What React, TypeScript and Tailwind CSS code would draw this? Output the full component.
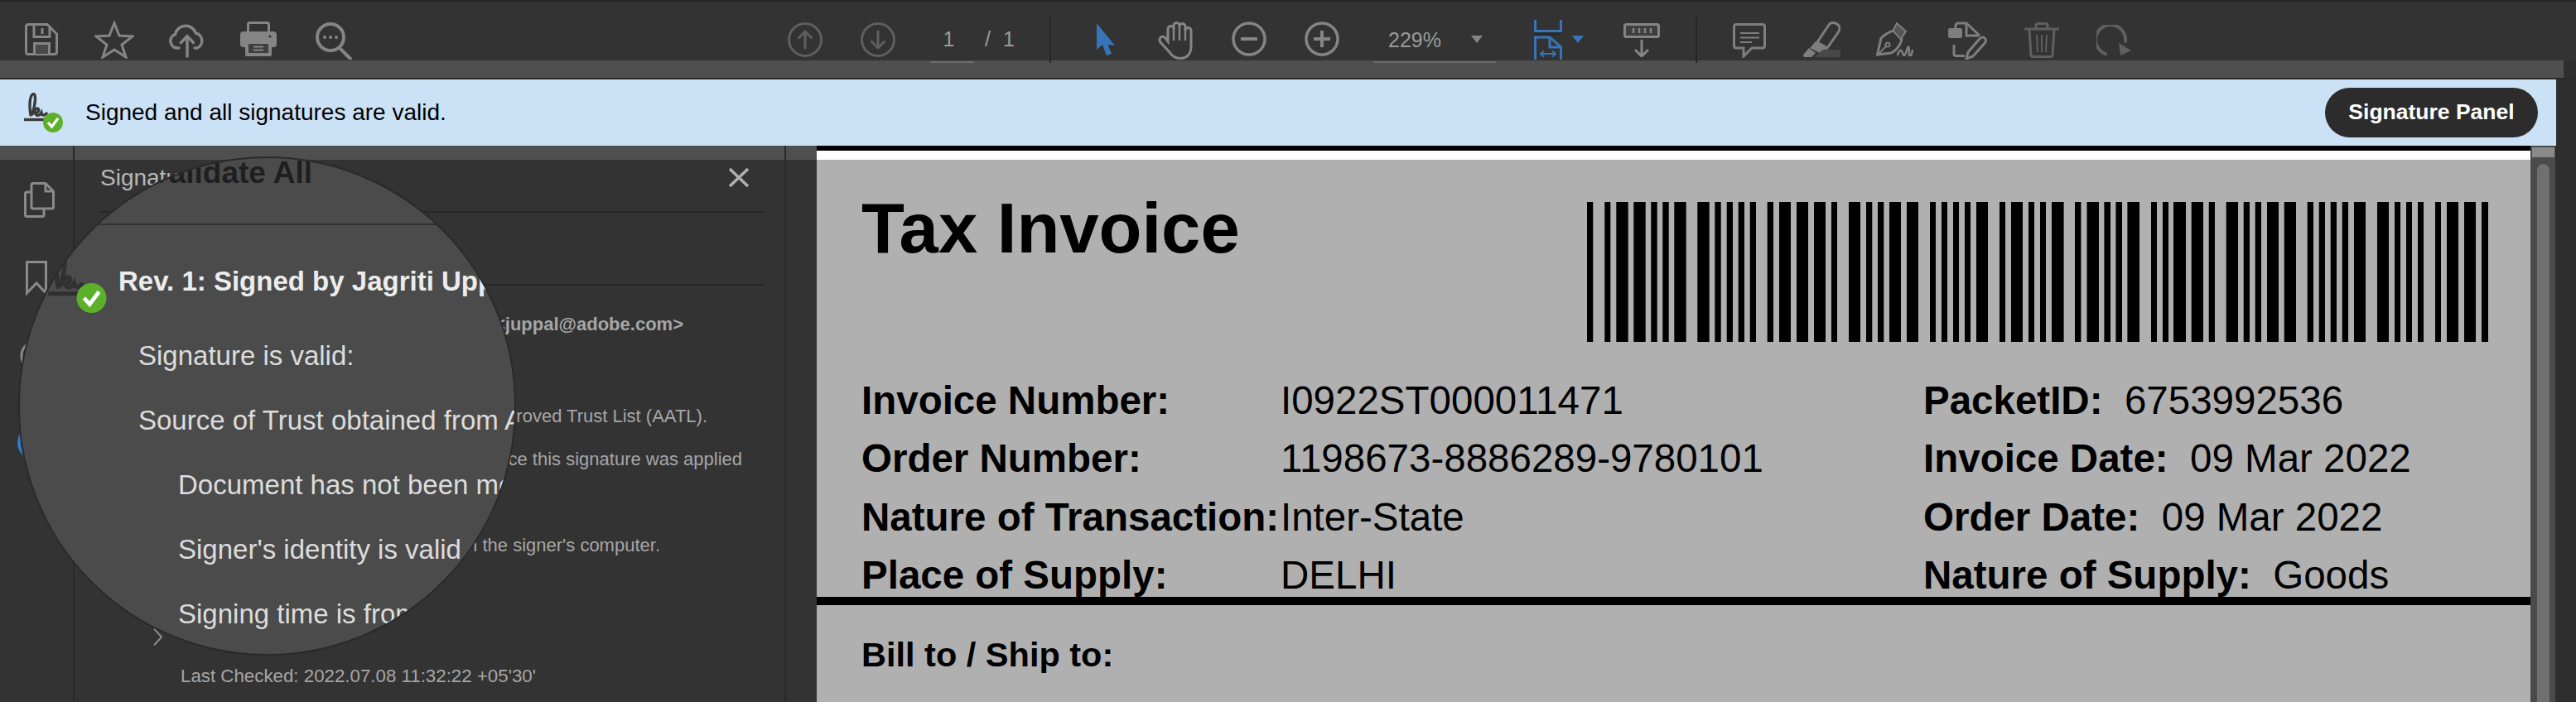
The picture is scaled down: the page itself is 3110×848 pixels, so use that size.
const gray = "#858585";
const dim = "#5f5f5f";
const blue = "#3774b8";

// barcode bars as [left, right] in page pixels
const bars = [
  [1916, 1923.3], [1937.3, 1944.3], [1951.3, 1965.7], [1972.3, 1986.7], [1993.3, 2000.7], [2007.3, 2014.7], [2021.3, 2035.7],
  [2049.3, 2063.7], [2070.3, 2077.7], [2084.7, 2092], [2098.7, 2106], [2112.7, 2120], [2133.7, 2141], [2148, 2162], [2169, 2183],
  [2190, 2204], [2211, 2218], [2232, 2246], [2253, 2260.3], [2267, 2274.3], [2281, 2295], [2302, 2316], [2330, 2337], [2344, 2351],
  [2358, 2365], [2372, 2379], [2386, 2400], [2414, 2421], [2428, 2442], [2449, 2456], [2463, 2470], [2477, 2491.6], [2505, 2512.4],
  [2519.5, 2534], [2540.4, 2548], [2554.4, 2562], [2568.4, 2583], [2597, 2604], [2611, 2618], [2624, 2639], [2645.7, 2660],
  [2666.7, 2674], [2687.7, 2702], [2708.7, 2716], [2722.7, 2730], [2737, 2751], [2757.7, 2772], [2785.7, 2793], [2799.7, 2807],
  [2813.7, 2821], [2827.7, 2835], [2842, 2856], [2870, 2884], [2891, 2898], [2905, 2912], [2919, 2926], [2940, 2947], [2954, 2968],
  [2975, 2989], [2996, 3004],
];

const SigIcon = ({ className, ink }: { className: string; ink: string }) => (
  <svg viewBox="0 0 48 48" className={className}>
    <path d="M8 27 C6 15 7 3 11 1.5 C15 0.5 14 14 9.5 27 C12 21 16 17 17.5 20 C18.5 24 13 25 13.5 23 C14 29 19 28 21 24 C22 28 25 28 27 25" fill="none" stroke={ink} strokeWidth="3.4" strokeLinecap="round" />
    <path d="M0 32.5 H26" stroke={ink} strokeWidth="3.4" />
    <circle cx="35" cy="36" r="12" fill="#5eb02b" />
    <path d="M29 36 L33.5 41 L41 31" fill="none" stroke="#fff" strokeWidth="3.2" />
  </svg>
);

const Toolbar = () => (
  <div className="flex h-[73px] items-start border-t-2 border-[#262626] bg-[#333333] text-[#9a9a9a]">
    <svg width="40" height="39" fill="none" stroke={gray} strokeWidth="3" className="ml-[30px] mt-[26px]">
      <path d="M4 1.5 H27 L38.5 13 V35 a2.5 2.5 0 0 1 -2.5 2.5 H4 a2.5 2.5 0 0 1 -2.5 -2.5 V4 a2.5 2.5 0 0 1 2.5 -2.5z" />
      <path d="M11 2 V16.5 H30 V4" />
      <path d="M21 6 V13" />
      <path d="M11.5 37 V24.5 H29.5 V37" fill="#4a4a4a" />
    </svg>
    <svg width="48" height="46" fill="none" stroke={gray} strokeWidth="3" className="ml-[44px] mt-[23px]">
      <path d="M24 3 L30 18 L46 19 L33 29 L38 44 L24 35 L10 44 L15 29 L2 19 L18 18 Z" />
    </svg>
    <svg width="44" height="42" fill="none" stroke={gray} strokeWidth="3.5" strokeLinecap="round" className="ml-[42px] mt-[26px]">
      <path d="M12 30 H10 A8.5 8.5 0 0 1 7.5 13.5 A13 13 0 0 1 32.5 12 A9.5 9.5 0 0 1 34 30 H31" />
      <path d="M22 40 V16 M14.5 23.5 L22 15.5 L29.5 23.5" />
    </svg>
    <svg width="44" height="42" className="ml-[42px] mt-[24px]">
      <rect x="9.5" y="1.5" width="25" height="14" rx="2" fill="none" stroke={gray} strokeWidth="3" />
      <rect y="12" width="44" height="19" rx="4" fill={gray} />
      <rect x="6" y="25" width="32" height="17" rx="2" fill={gray} />
      <rect x="10" y="27" width="24" height="11" fill="#3f3f3f" />
      <path d="M16 30.5 H28 M16 34.5 H28" stroke={gray} strokeWidth="2" />
      <circle cx="36" cy="18" r="1.5" fill="#333333" />
    </svg>
    <svg width="44" height="45" fill="none" stroke={gray} strokeWidth="4" strokeLinecap="round" className="ml-[47px] mt-[25px]">
      <circle cx="18" cy="18" r="16" />
      <path d="M29 31 L42 44" />
      <circle cx="11" cy="18" r="2" fill={gray} stroke="none" />
      <circle cx="18" cy="18" r="2" fill={gray} stroke="none" />
      <circle cx="25" cy="18" r="2" fill={gray} stroke="none" />
    </svg>

    <svg width="42" height="42" fill="none" stroke={dim} strokeWidth="3" className="ml-[526px] mt-[25px]">
      <circle cx="21" cy="21" r="19.5" />
      <path d="M21 32 V11 M12.5 19.5 L21 11 L29.5 19.5" />
    </svg>
    <svg width="42" height="42" fill="none" stroke={dim} strokeWidth="3" className="ml-[46px] mt-[25px]">
      <circle cx="21" cy="21" r="19.5" />
      <path d="M21 10 V31 M12.5 22.5 L21 31 L29.5 22.5" />
    </svg>
    <div className="relative ml-[42px] mt-[30px] w-[53px] pr-[8px] text-center text-[25px] leading-[30px]">
      1
      <div className="absolute left-0 top-[42px] h-[2px] w-[53px] bg-[#6a6a6a]" />
    </div>
    <div className="ml-[13px] mt-[30px] flex w-[32px] gap-[15px] whitespace-nowrap text-[25px] leading-[30px]">
      <span>/</span>
      <span>1</span>
    </div>
    <div className="relative z-10 ml-[46px] mt-[18px] h-[56px] w-[2px] shrink-0 bg-[#262626]" />

    <svg width="25" height="40" className="ml-[53px] mt-[25px]">
      <path d="M2 1 L24 28 L15.5 27 L20 38 L14 40 L9 27 L2 33 Z" fill={blue} />
    </svg>
    <svg width="44" height="46" fill="none" stroke={gray} strokeWidth="3" className="ml-[51px] mt-[24px]">
      <path d="M14 37 L3 25 C0 20 5 16 9 20 L12 24 V9 a3.5 3.5 0 0 1 7 0 V5 a3.5 3.5 0 0 1 7 0 V6 a3.5 3.5 0 0 1 7 0 V11 a3.5 3.5 0 0 1 7 0 V30 C40 39 35 44.5 27 44.5 C21 44.5 17 42 14 37 Z" />
      <path d="M19 8 V23 M26 6 V23 M33 8 V23" strokeWidth="2.5" />
    </svg>
    <svg width="42" height="42" fill="none" stroke={gray} strokeWidth="3.5" className="ml-[45px] mt-[24px]">
      <circle cx="21" cy="21" r="19" />
      <path d="M11 21 H31" strokeWidth="4" />
    </svg>
    <svg width="42" height="42" fill="none" stroke={gray} strokeWidth="3.5" className="ml-[46px] mt-[24px]">
      <circle cx="21" cy="21" r="19" />
      <path d="M11 21 H31 M21 11 V31" strokeWidth="4" />
    </svg>
    <div className="relative ml-[59px] mt-[31px] w-[63px] text-[25px] leading-[30px]">
      229%
      <div className="absolute left-[-17px] top-[41px] h-[2px] w-[147px] bg-[#6a6a6a]" />
    </div>
    <svg width="14" height="9" className="ml-[37px] mt-[41px]">
      <path d="M0 0 H14 L7 9 Z" fill={gray} />
    </svg>
    <svg width="34" height="48" fill="none" stroke={blue} strokeWidth="3" className="ml-[62px] mt-[22px]">
      <path d="M1.5 0 V13.5 H32.5 V0" />
      <path d="M0 17 H34" stroke="#2a2a2a" strokeWidth="4" />
      <path d="M1.5 48 V21 H19 L32.5 33 V48" />
      <path d="M19 21 V33 H32" />
      <path d="M9 41 H25 M12 37.5 L8 41 L12 44.5 M22 37.5 L26 41 L22 44.5" strokeWidth="2" />
    </svg>
    <svg width="14" height="9" className="ml-[12px] mt-[41px]">
      <path d="M0 0 H14 L7 9 Z" fill={blue} />
    </svg>
    <svg width="44" height="41" fill="none" stroke={gray} strokeWidth="3" className="ml-[48px] mt-[26px]">
      <rect x="1.5" y="1.5" width="41" height="15" rx="2" fill="#3f3f3f" />
      <path d="M12 6 V12 M19 6 V12 M26 6 V12 M33 6 V12" strokeWidth="2.5" />
      <path d="M22 20 V39 M14 32 L22 40 L30 32" />
    </svg>
    <div className="relative z-10 ml-[43px] mt-[18px] h-[56px] w-[2px] shrink-0 bg-[#262626]" />

    <svg width="40" height="42" fill="none" stroke="#7e7e7e" strokeWidth="3" className="ml-[43px] mt-[26px]">
      <path d="M4 1.5 H36 a2.5 2.5 0 0 1 2.5 2.5 V27.5 a2.5 2.5 0 0 1 -2.5 2.5 H23 L13 40 V30 H4 a2.5 2.5 0 0 1 -2.5 -2.5 V4 a2.5 2.5 0 0 1 2.5 -2.5 Z" />
      <path d="M9 12 H32 M9 17.5 H32 M9 23 H23" strokeWidth="2" />
    </svg>
    <svg width="45" height="43" fill="none" stroke="#7e7e7e" strokeWidth="3" className="ml-[45px] mt-[24px]">
      <path d="M31 4 C33 0 40 1 43 5 C45 8 44 10 43 12 L29 32 L17 25 Z" />
      <path d="M15 24 L28 33 L22 39 L8 32 Z" fill="#7e7e7e" stroke="none" />
      <path d="M7 32 L15 38 L10 43 H1 Q-1 41 1 39 Z" fill="#7e7e7e" stroke="none" />
      <path d="M24 34 H45 V43 H13 Z" fill="#484848" stroke="none" />
    </svg>
    <svg width="45" height="41" fill="none" stroke="#7e7e7e" strokeWidth="3" strokeLinecap="round" className="ml-[43px] mt-[25px]">
      <path d="M1.5 39 L6 19 Q12 13 21 10 L31 21 Q27 33 18 37 Z" />
      <path d="M21 9 L25 1 L36 11 L30 20" fill="#565656" strokeWidth="2" />
      <path d="M3 38 L12 29" strokeWidth="2" />
      <circle cx="14" cy="27" r="2.5" strokeWidth="2" />
      <path d="M26 39 Q30 30 32 37 T37 34 T40 37 T44 34" strokeWidth="2.6" />
    </svg>
    <svg width="48" height="46" fill="none" stroke="#7e7e7e" strokeWidth="3" className="ml-[42px] mt-[24px]">
      <path d="M9 9 V5 a3 3 0 0 1 3 -3 H22 L38 17" />
      <path d="M22 3 V17 H37" />
      <rect y="8" width="17" height="12" rx="2" fill="#7e7e7e" stroke="none" />
      <path d="M7 28 V39 a2.5 2.5 0 0 0 2.5 2.5 H20" />
      <path d="M38 21 a4 4 0 0 1 7 4 L30 42 L22 45 L24 37 Z" />
    </svg>
    <svg width="42" height="43" fill="none" stroke={dim} strokeWidth="3" className="ml-[44px] mt-[25px]">
      <path d="M0 8 H42" />
      <path d="M14 7 V3.5 a2 2 0 0 1 2 -2 H26 a2 2 0 0 1 2 2 V7" />
      <path d="M6 9 L8 39 a2.5 2.5 0 0 0 2.5 2.5 H31.5 a2.5 2.5 0 0 0 2.5 -2.5 L36 9" />
      <path d="M15 15 L16 36 M21 15 V36 M27 15 L26 36" strokeWidth="2" />
    </svg>
    <svg width="42" height="37" fill="none" stroke={dim} strokeWidth="4" strokeLinecap="round" className="ml-[45px] mt-[28px]">
      <path d="M11 35 A18 18 0 1 1 35 20" />
      <path d="M27 22 L42 31 L29 37 Z" fill={dim} stroke="none" />
    </svg>
  </div>
);

const Banner = () => (
  <div className="flex h-[80px] w-[3086px] items-center bg-[#cbe2f6] pl-[29px] pr-[22px] text-[28px] text-black">
    <SigIcon className="h-[48px] w-[48px] shrink-0" ink="#3a3a3a" />
    <span className="ml-[26px]">Signed and all signatures are valid.</span>
    <button className="ml-auto h-[60px] w-[257px] rounded-[30px] bg-[#2c2c2c] text-[26.5px] font-bold text-white">
      Signature Panel
    </button>
  </div>
);

const Rail = () => (
  <div className="flex w-[90px] shrink-0 flex-col border-r-2 border-[#2a2a2a]">
    <div className="h-[17px] bg-[#4f4f4f]" />
    <svg width="37" height="43" fill="none" stroke="#8a8a8a" strokeWidth="3" className="ml-[29px] mt-[27px]">
      <path d="M11 1.5 H26 L35.5 11 V30 a2 2 0 0 1 -2 2 H11 a2 2 0 0 1 -2 -2 V3.5 a2 2 0 0 1 2 -2 Z" />
      <path d="M26 2 V11 H35" />
      <path d="M9 12 H3.5 a2 2 0 0 0 -2 2 V39.5 a2 2 0 0 0 2 2 H22 a2 2 0 0 0 2 -2 V32" />
    </svg>
    <svg width="26" height="42" fill="none" stroke="#8a8a8a" strokeWidth="3" className="ml-[31px] mt-[52px]">
      <path d="M1.5 1.5 H24.5 V39 L13 27 L1.5 39 Z" />
    </svg>
    <svg width="40" height="40" fill="none" stroke="#8a8a8a" strokeWidth="3" className="ml-[24px] mt-[53px]">
      <circle cx="20" cy="20" r="18" />
    </svg>
    <svg width="40" height="40" fill="none" stroke="#2f79c9" strokeWidth="4" className="ml-[21px] mt-[65px]">
      <circle cx="20" cy="20" r="18" />
    </svg>
  </div>
);

const SidePanel = () => (
  <div className="flex w-[859px] shrink-0 flex-col border-r-2 border-[#2a2a2a] text-[22px] leading-[28px] text-[#a6a6a6]">
    <div className="h-[17px] bg-[#4f4f4f]" />
    <div className="mx-[31px] mr-[25px] flex h-[64px] items-start justify-between border-b-2 border-[#262626] text-[28px] leading-[44px] text-[#b8b8b8]">
      <span>Signatures</span>
      <svg width="24" height="23" stroke="#b0b0b0" strokeWidth="3.5" className="mr-[18px] mt-[10px]">
        <path d="M1 1 L23 22 M23 1 L1 22" />
      </svg>
    </div>
    <div className="mx-[31px] mr-[25px] h-[88px] border-b-2 border-[#262626]" />
    <div className="mt-[33px] whitespace-nowrap pr-[122px] text-right font-bold">Jagriti Uppal &lt;juppal@adobe.com&gt;</div>
    <div className="mt-[83px] whitespace-nowrap pr-[93px] text-right">Source of Trust obtained from Adobe Approved Trust List (AATL).</div>
    <div className="mt-[24px] whitespace-nowrap pr-[51px] text-right">Document has not been modified since this signature was applied</div>
    <div className="mt-[76px] whitespace-nowrap pr-[150px] text-right">Signing time is from the clock on the signer&apos;s computer.</div>
    <svg width="11" height="21" fill="none" stroke="#8a8a8a" strokeWidth="2" className="ml-[95px] mt-[86px]">
      <path d="M1 0.5 L10 10.5 L1 20.5" />
    </svg>
    <div className="ml-[128px] mt-[23px] whitespace-nowrap text-[22.3px]">Last Checked: 2022.07.08 11:32:22 +05&apos;30&apos;</div>
  </div>
);

// magnifying lens that sits over the rail and the panel
const Lens = () => (
  <div className="absolute left-[22px] top-[189px] z-20 h-[603px] w-[601px] overflow-hidden rounded-full border-2 border-[#2a2a2a] bg-[#4b4b4b]">
    <div className="-mt-[4px] whitespace-nowrap pl-[157px] text-[37px] font-bold leading-[44px] text-[#1f1f1f]">Validate All</div>
    <div className="mt-[39px] h-[2px] bg-[#2f2f2f]" />
    <SigIcon className="absolute left-[34px] top-[115px] h-[72px] w-[72px]" ink="#303030" />
    <div className="mt-[48px] whitespace-nowrap pl-[119px] text-[33px] font-bold leading-[40px] text-[#ececec]">Rev. 1: Signed by Jagriti Uppal</div>
    <div className="mt-[50px] whitespace-nowrap pl-[143px] text-[33px] leading-[40px] text-[#dcdcdc]">Signature is valid:</div>
    <div className="mt-[38px] whitespace-nowrap pl-[143px] text-[33px] leading-[40px] text-[#dcdcdc]">Source of Trust obtained from Adobe</div>
    <div className="mt-[38px] whitespace-nowrap pl-[191px] text-[33px] leading-[40px] text-[#dcdcdc]">Document has not been modified</div>
    <div className="mt-[38px] whitespace-nowrap pl-[191px] text-[33px] leading-[40px] text-[#dcdcdc]">Signer&apos;s identity is valid</div>
    <div className="mt-[38px] whitespace-nowrap pl-[191px] text-[33px] leading-[40px] text-[#dcdcdc]">Signing time is from the clock</div>
  </div>
);

const InvoicePage = () => (
  <div className="w-[2069px] shrink-0 overflow-hidden border-t-[6px] border-black bg-[#b0b0b0] text-[47.5px] leading-[70.3px] text-black">
    <div className="h-[11px] bg-white" />
    <div className="flex items-start justify-between pl-[54px] pr-[51px] pt-[41px]">
      <h1 className="text-[85px] font-bold leading-[84px]">Tax Invoice</h1>
      <svg width="1088" height="169" className="mt-[10px]">
        {bars.map(([from, to]) => (
          <rect key={from} x={from - 1916} width={to - from} height="169" />
        ))}
      </svg>
    </div>
    <div className="mt-[36px] grid grid-cols-[506px_776px_1fr] whitespace-nowrap pl-[54px]">
      <b>Invoice Number:</b>
      <span>I0922ST000011471</span>
      <span><b>PacketID:</b>&nbsp;&nbsp;6753992536</span>
      <b>Order Number:</b>
      <span>1198673-8886289-9780101</span>
      <span><b>Invoice Date:</b>&nbsp;&nbsp;09 Mar 2022</span>
      <b>Nature of Transaction:</b>
      <span>Inter-State</span>
      <span><b>Order Date:</b>&nbsp;&nbsp;09 Mar 2022</span>
      <b>Place of Supply:</b>
      <span>DELHI</span>
      <span><b>Nature of Supply:</b>&nbsp;&nbsp;Goods</span>
    </div>
    <div className="-mt-[9px] h-[10px] bg-black" />
    <div className="mt-[36px] pl-[54px] text-[41.5px] font-bold leading-[48px]">Bill to / Ship to:</div>
  </div>
);

const App = () => (
  <div className="relative h-[848px] w-[3110px] overflow-hidden bg-[#2e2e2e] font-['Liberation_Sans',Arial,sans-serif]">
    <Toolbar />
    <div className="h-[21px] w-[3095px] bg-[#4f4f4f]" />
    <div className="h-[2px] bg-[#2a2a2a]" />
    <Banner />
    <div className="flex h-[672px]">
      <div className="flex w-[986px] shrink-0 bg-[#333333]">
        <Rail />
        <SidePanel />
        <div className="h-[17px] flex-1 bg-[#4f4f4f]" />
      </div>
      <InvoicePage />
      <div className="flex w-[30px] shrink-0 flex-col items-center bg-[#4a4a4a]">
        <div className="mt-[2px] h-[12px] w-[27px] shrink-0 bg-[#8a8a8a]" />
        <div className="mt-[8px] h-full w-[15px] rounded-t-full bg-[#6f6f6f]" />
      </div>
    </div>
    <Lens />
  </div>
);

export default App;
